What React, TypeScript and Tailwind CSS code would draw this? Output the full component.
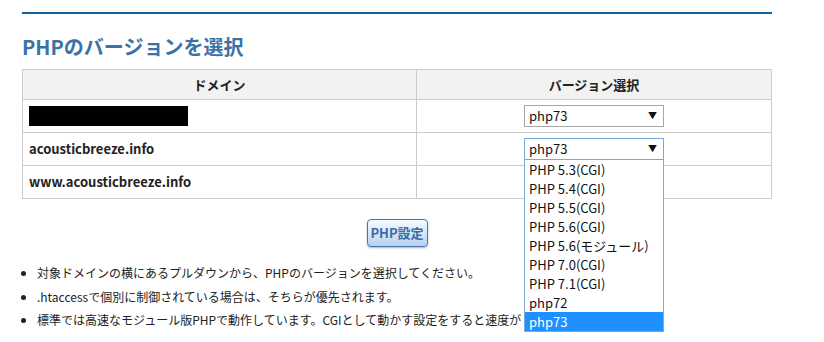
const font = { fontFamily: '"Noto Sans CJK JP", "Noto Sans", sans-serif' };

const options = [
  "PHP 5.3(CGI)",
  "PHP 5.4(CGI)",
  "PHP 5.5(CGI)",
  "PHP 5.6(CGI)",
  "PHP 5.6(モジュール)",
  "PHP 7.0(CGI)",
  "PHP 7.1(CGI)",
  "php72",
  "php73",
];

function FakeSelect({ open = false }: { open?: boolean }) {
  return (
    <div className="relative mx-auto w-[140px]">
      <div
        className={`flex h-[22px] items-center justify-between bg-white pl-[4px] pr-[6px] text-[13px] text-[#111] ${
          open ? "border border-[#7aa7dc]" : "border border-[#a6a6a6]"
        }`}
      >
        <span>php73</span>
        <span className="text-[9px]">▼</span>
      </div>
      {open && (
        <ul className="absolute left-0 top-full z-10 w-[140px] border border-t-0 border-[#7aa7dc] bg-white text-[13px] text-[#111]">
          {options.map((o) => (
            <li
              key={o}
              className={`h-[19px] pl-[4px] leading-[19px] ${o === "php73" ? "bg-[#1e90ff] text-white" : ""}`}
            >
              {o}
            </li>
          ))}
        </ul>
      )}
    </div>
  );
}

export default function App() {
  const rows = [
    { domain: null, open: false },
    { domain: "acousticbreeze.info", open: true },
    { domain: "www.acousticbreeze.info", open: null },
  ];

  return (
    <div className="min-h-[342px] bg-white px-[22px] pt-[12px] text-[#222]" style={font}>
      <div className="w-[750px]">
        <div className="h-[2px] bg-[#0d6499]" />
        <h2 className="mt-[19px] text-[20px] font-bold leading-[28px] text-[#3b72a6]">PHPのバージョンを選択</h2>

        <table className="mt-[8px] w-full border-collapse text-[13px]">
          <thead>
            <tr className="h-[30px] bg-[#f2f2f2]">
              <th className="w-[394px] border border-[#cccccc] font-bold">ドメイン</th>
              <th className="border border-[#cccccc] font-bold">バージョン選択</th>
            </tr>
          </thead>
          <tbody>
            {rows.map((r, i) => (
              <tr key={i} className="h-[33px]">
                <td className="border border-[#cccccc] px-[6px] font-bold">
                  {r.domain ?? <div className="h-[20px] w-[159px] bg-black" />}
                </td>
                <td className="border border-[#cccccc]">
                  {r.open !== null && <FakeSelect open={r.open} />}
                </td>
              </tr>
            ))}
          </tbody>
        </table>

        <div className="mt-[20px] flex justify-center">
          <button className="h-[28px] w-[61px] rounded-[4px] border border-[#4677ad] bg-gradient-to-b from-[#f7fbff] to-[#b6d3ee] text-[13px] font-bold text-[#3a6ca3] shadow-[0_1px_2px_rgba(0,0,0,0.3)]">
            PHP設定
          </button>
        </div>

        <ul className="mt-[14px] list-disc pl-[15px] text-[12px] text-[#222]">
          <li className="leading-[23.5px]">対象ドメインの横にあるプルダウンから、PHPのバージョンを選択してください。</li>
          <li className="leading-[23.5px]">.htaccessで個別に制御されている場合は、そちらが優先されます。</li>
          <li className="leading-[23.5px]">
            <span className="block w-[484px] overflow-hidden whitespace-nowrap">
              標準では高速なモジュール版PHPで動作しています。CGIとして動かす設定をすると速度が
            </span>
          </li>
        </ul>

        <div className="mt-[11px] border-t border-dotted border-[#999]" />
      </div>
    </div>
  );
}
